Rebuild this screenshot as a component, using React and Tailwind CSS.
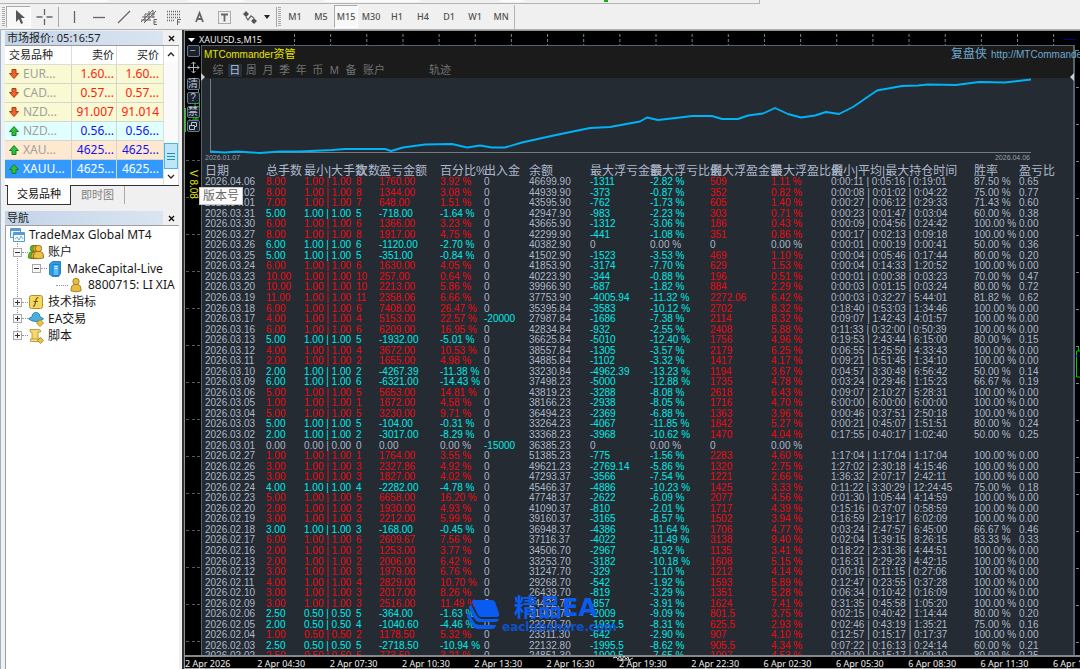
import React from "react";

const RECORDS = `2026.04.06;8.00;1.00;8;1760.00;3.92;0;46699.90;-1311;-2.82;509;1.11;0:00:11 | 0:05:16 | 0:19:01;87.50;0.65
2026.04.02;8.00;1.00;8;1344.00;3.08;0;44939.90;-373;-0.87;352;0.82;0:00:08 | 0:01:02 | 0:04:22;75.00;0.77
2026.04.01;7.00;1.00;7;648.00;1.51;0;43595.90;-762;-1.73;605;1.40;0:00:27 | 0:06:12 | 0:29:33;71.43;0.60
2026.03.31;5.00;1.00;5;-718.00;-1.64;0;42947.90;-983;-2.23;303;0.71;0:00:23 | 0:01:47 | 0:03:04;60.00;0.38
2026.03.30;6.00;1.00;6;1366.00;3.23;0;43665.90;-1312;-3.06;186;0.43;0:00:09 | 0:04:56 | 0:24:42;100.00;0.00
2026.03.27;8.00;1.00;8;1917.00;4.75;0;42299.90;-441;-1.08;351;0.86;0:00:17 | 0:02:13 | 0:09:18;100.00;0.00
2026.03.26;6.00;1.00;6;-1120.00;-2.70;0;40382.90;0;0.00;0;0.00;0:00:01 | 0:00:19 | 0:00:41;50.00;0.36
2026.03.25;5.00;1.00;5;-351.00;-0.84;0;41502.90;-1523;-3.53;469;1.10;0:00:04 | 0:05:46 | 0:17:44;80.00;0.20
2026.03.24;6.00;1.00;6;1630.00;4.05;0;41853.90;-3174;-7.70;629;1.53;0:00:04 | 0:14:33 | 1:20:52;100.00;0.00
2026.03.23;10.00;1.00;10;257.00;0.64;0;40223.90;-344;-0.88;196;0.51;0:00:01 | 0:00:38 | 0:03:23;70.00;0.47
2026.03.20;10.00;1.00;10;2213.00;5.86;0;39966.90;-687;-1.82;884;2.29;0:00:03 | 0:01:15 | 0:03:24;80.00;0.72
2026.03.19;11.00;1.00;11;2358.06;6.66;0;37753.90;-4005.94;-11.32;2272.06;6.42;0:00:03 | 0:32:27 | 5:44:01;81.82;0.62
2026.03.18;6.00;1.00;6;7408.00;26.47;0;35395.84;-3583;-10.12;2702;8.32;0:18:40 | 0:53:03 | 1:34:46;100.00;0.00
2026.03.17;4.00;1.00;4;5153.00;22.57;-20000;27987.84;-1686;-7.38;2114;8.32;0:09:07 | 1:42:43 | 4:01:57;100.00;0.00
2026.03.16;6.00;1.00;6;6209.00;16.95;0;42834.84;-932;-2.55;2408;5.88;0:11:33 | 0:32:00 | 0:50:39;100.00;0.00
2026.03.13;5.00;1.00;5;-1932.00;-5.01;0;36625.84;-5010;-12.40;1756;4.96;0:19:53 | 2:43:44 | 6:15:00;80.00;0.15
2026.03.12;4.00;1.00;4;3672.00;10.53;0;38557.84;-1305;-3.57;2179;6.25;0:06:55 | 1:25:50 | 4:33:43;100.00;0.00
2026.03.11;2.00;1.00;2;1655.00;4.98;0;34885.84;-1102;-3.32;1417;4.17;0:09:21 | 0:51:45 | 1:34:10;100.00;0.00
2026.03.10;2.00;1.00;2;-4267.39;-11.38;0;33230.84;-4962.39;-13.23;1194;3.67;0:04:57 | 3:30:49 | 6:56:42;50.00;0.14
2026.03.09;6.00;1.00;6;-6321.00;-14.43;0;37498.23;-5000;-12.88;1735;4.78;0:03:24 | 0:29:46 | 1:15:23;66.67;0.19
2026.03.06;5.00;1.00;5;5653.00;14.81;0;43819.23;-3288;-8.08;2618;6.43;0:09:07 | 2:10:27 | 5:28:31;100.00;0.00
2026.03.05;1.00;1.00;1;1672.00;4.58;0;38166.23;-2938;-8.05;1716;4.70;6:00:00 | 6:00:00 | 6:00:00;100.00;0.00
2026.03.04;5.00;1.00;5;3230.00;9.71;0;36494.23;-2369;-6.88;1363;3.96;0:00:46 | 0:37:51 | 2:50:18;100.00;0.00
2026.03.03;5.00;1.00;5;-104.00;-0.31;0;33264.23;-4067;-11.85;1842;5.27;0:00:21 | 0:45:07 | 1:51:51;80.00;0.24
2026.03.02;2.00;1.00;2;-3017.00;-8.29;0;33368.23;-3968;-10.62;1470;4.04;0:17:55 | 0:40:17 | 1:02:40;50.00;0.25
2026.03.01;0.00;0.00;0;0.00;0.00;-15000;36385.23;0;0.00;0;0.00;;;
2026.02.27;1.00;1.00;1;1764.00;3.55;0;51385.23;-775;-1.56;2283;4.60;1:17:04 | 1:17:04 | 1:17:04;100.00;0.00
2026.02.26;3.00;1.00;3;2327.86;4.92;0;49621.23;-2769.14;-5.86;1320;2.75;1:27:02 | 2:30:18 | 4:15:46;100.00;0.00
2026.02.25;3.00;1.00;3;1827.00;4.02;0;47293.37;-3566;-7.54;1221;2.66;1:36:32 | 2:07:17 | 2:42:11;100.00;0.00
2026.02.24;4.00;1.00;4;-2282.00;-4.78;0;45466.37;-4886;-10.23;1425;3.33;0:11:22 | 3:30:29 | 12:24:45;75.00;0.18
2026.02.23;5.00;1.00;5;6658.00;16.20;0;47748.37;-2622;-6.09;2077;4.56;0:01:30 | 1:05:44 | 4:14:59;100.00;0.00
2026.02.20;2.00;1.00;2;1930.00;4.93;0;41090.37;-810;-2.01;1717;4.39;0:15:16 | 0:37:07 | 0:58:59;100.00;0.00
2026.02.19;3.00;1.00;3;2212.00;5.99;0;39160.37;-3165;-8.57;1502;3.94;0:16:59 | 2:19:17 | 6:02:09;100.00;0.00
2026.02.18;3.00;1.00;3;-168.00;-0.45;0;36948.37;-4386;-11.64;1706;4.77;0:03:24 | 2:47:57 | 6:45:00;66.67;0.46
2026.02.17;6.00;1.00;6;2609.67;7.56;0;37116.37;-4022;-11.49;3138;9.40;0:02:04 | 1:39:15 | 8:26:15;83.33;0.33
2026.02.16;2.00;1.00;2;1253.00;3.77;0;34506.70;-2967;-8.92;1135;3.41;0:18:22 | 2:31:36 | 4:44:51;100.00;0.00
2026.02.13;2.00;1.00;2;2006.00;6.42;0;33253.70;-3182;-10.18;1608;5.15;0:16:31 | 2:29:23 | 4:42:15;100.00;0.00
2026.02.12;3.00;1.00;3;1979.00;6.76;0;31247.70;-329;-1.10;1212;4.14;0:00:16 | 0:11:15 | 0:27:06;100.00;0.00
2026.02.11;4.00;1.00;4;2829.00;10.70;0;29268.70;-542;-1.92;1593;5.89;0:12:47 | 0:23:55 | 0:37:28;100.00;0.00
2026.02.10;3.00;1.00;3;2017.00;8.26;0;26439.70;-819;-3.29;1351;5.28;0:06:34 | 0:10:42 | 0:16:09;100.00;0.00
2026.02.09;3.00;1.00;3;2516.00;11.49;0;24422.70;-857;-3.91;1624;7.41;0:31:35 | 0:45:58 | 1:05:20;100.00;0.00
2026.02.06;2.50;0.50;5;-364.00;-1.63;0;21906.70;-2009;-9.09;801.5;3.75;0:02:15 | 0:40:42 | 1:14:44;80.00;0.20
2026.02.05;2.00;0.50;4;-1040.60;-4.46;0;22270.70;-1937.5;-8.31;625.5;2.93;0:02:46 | 0:43:19 | 1:35:21;75.00;0.16
2026.02.04;1.00;0.50;2;1178.50;5.32;0;23311.30;-642;-2.90;907;4.10;0:12:57 | 0:15:17 | 0:17:37;100.00;0.00
2026.02.03;2.50;0.50;5;-2718.50;-10.94;0;22132.80;-1995.5;-8.62;905.5;4.34;0:07:22 | 0:16:13 | 0:24:14;60.00;0.21
2026.02.02;2.50;0.50;5;773.50;3.21;0;24851.30;-1900.5;-7.65;1097;4.53;0:00:00 | 0:15:17 | 1:09:10;80.00;0.25`
  .split("\n")
  .map((line) => line.split(";"));

const COLUMNS = ["日期", "总手数", "最小|大手数", "次数", "盈亏金额", "百分比%", "出入金", "余额", "最大浮亏金额", "最大浮亏比例", "最大浮盈金额", "最大浮盈比例", "最小|平均|最大持仓时间", "胜率", "盈亏比"];

const ROW_GRID =
  "grid grid-cols-[61fr_38fr_52fr_23fr_61fr_44fr_45fr_61fr_60fr_60fr_61fr_60fr_143fr_45fr_54fr] pl-[3px] *:min-w-0 *:whitespace-nowrap";

const RED = "text-[#ee0a12]";
const CYAN = "text-[#00ebe8]";
const GRAY = "text-[#adb8c8]";

function signColor(value) {
  const n = Number(value);
  if (n > 0) return RED;
  return n < 0 ? CYAN : GRAY;
}

function percent(value) {
  return value ? value + " %" : "";
}

function ReportRow({ r }) {
  const main = signColor(r[4]);
  const cells = [
    [r[0], GRAY],
    [r[1], main],
    [r[2] + " | " + r[2], main],
    [r[3], main],
    [r[4], main],
    [percent(r[5]), main],
    [r[6], signColor(r[6])],
    [r[7], GRAY],
    [r[8], signColor(r[8])],
    [percent(r[9]), signColor(r[9])],
    [r[10], signColor(r[10])],
    [percent(r[11]), signColor(r[11])],
    [r[12], GRAY],
    [percent(r[13]), GRAY],
    [r[14], GRAY],
  ];
  return (
    <tr className={ROW_GRID + " min-h-0"}>
      {cells.map(([text, color], i) => (
        <td key={i} className={"block " + color}>
          {text}
        </td>
      ))}
    </tr>
  );
}

function EquityChart() {
  return (
    <div className="relative h-[86px] shrink-0">
      <svg className="block h-full w-full" viewBox="202 78 871 86" preserveAspectRatio="none" fill="none">
        <path d="M210.500 79V152.500H1031" stroke="#777b7f" />
        <polyline
          stroke="#00b2f6"
          strokeWidth="1.900"
          strokeLinejoin="round"
          points="210,151.500 225,152.500 237,151.500 260,153 280,151.500 300,151.500 332,150 345,149 385,149 391,151 403,147.500 425,144.500 452,144 467,147.500 480,145.500 492,147.500 505,147.500 522,142.500 540,138.500 556,135 590,128 610,127 640,121.500 647,117.500 658,120 680,117.500 692,116 712,116 722,119 738,119 748,115.500 763,113.500 775,108 788,114 801,117.500 815,115.500 826,112 839,114 853,107 877,90.500 902,86 918,85.500 928,84.500 956,85 979,82 1005,82.500 1031,79.500"
        />
      </svg>
      <div className="absolute inset-x-0 bottom-0 flex justify-between pr-[43px] pl-[3px] text-[7px] leading-[12px] text-[#98a1aa]">
        <span>2026.01.07</span>
        <span>2026.04.06</span>
      </div>
    </div>
  );
}

const MENU = ["综", "日", "周", "月", "季", "年", "币", "M", "备"];

function Watermark() {
  return (
    <div className="pointer-events-none absolute bottom-5 left-[262px] flex items-center gap-0.5 text-[#0a5cf0]">
      <svg width="36" height="34" viewBox="0 0 36 34" fill="currentColor">
        <path d="M10 1h18q2 0 3 2l4 11q1 4-3 4H17q-2 0-3-2L8 3Q8 1 10 1Z" />
        <path d="M7 6l6 11q2 3 5 3h17q-1 3-4 3H16q-4 0-6-4L5 9Q5 6 7 6Z" />
        <path d="M4 13l6 10q2 3 6 3h16q-1 4-4 4H14q-4 0-6-4L3 18q-1-3 1-5Z" />
      </svg>
      <div className="font-['DejaVu_Sans','Noto_Sans_CJK_SC',sans-serif] font-bold">
        <div className="pl-3 text-[24px] leading-[24px]">精品EA</div>
        <div className="text-[12px] leading-[15px] opacity-80">eaclubshare.com</div>
      </div>
    </div>
  );
}

function ReportPanel() {
  return (
    <div className="relative flex min-w-0 flex-1 flex-col border-t border-r-2 border-l border-[#55616e] bg-[#242b33]">
      <div className="h-8 shrink-0 bg-[#1b1b1b]">
        <div className="flex h-4 items-center justify-between pl-0.5 whitespace-nowrap">
          <span className="text-[10px] text-[#e6e600]">
            MTCommander<span className="text-[11px]">资管</span>
          </span>
          <a href="#report" className="-mr-2 flex w-[130px] items-center gap-1 text-[10px] text-[#6fa8cf]">
            <span className="text-[12px]">复盘侠</span>http://MTCommander
          </a>
        </div>
        <div className="flex h-4 items-center pl-[9px] text-[11px] text-[#6e7276]">
          <div className="flex w-[147px] justify-between">
            {MENU.map((m) => (
              <button
                key={m}
                className={
                  m === "日"
                    ? "h-[13px] w-3.5 bg-[#26303c] leading-[12px] text-[#a9c0dc]"
                    : "h-[13px] w-3.5 leading-[12px]"
                }
              >
                {m}
              </button>
            ))}
          </div>
          <button className="ml-[5px] leading-[12px]">账户</button>
          <button className="ml-11 leading-[12px]">轨迹</button>
        </div>
      </div>
      <EquityChart />
      <div className="min-h-0 flex-1 overflow-hidden">
        <table className="block w-full text-[10px] leading-[11px]">
          <thead className="block">
            <tr className={ROW_GRID + " h-3 text-[12px] leading-[14px] text-[#aeb8ca]"}>
              {COLUMNS.map((c, i) => (
                <th key={i} className="block text-left font-normal">
                  {c}
                </th>
              ))}
            </tr>
          </thead>
          <tbody className="grid h-[485px] auto-rows-fr">
            {RECORDS.map((r) => (
              <ReportRow key={r[0]} r={r} />
            ))}
          </tbody>
        </table>
      </div>
      <svg className="absolute top-[27px] -left-px h-2 w-1" viewBox="0 0 4 8">
        <path d="M0 0l4 4-4 4Z" fill="#c8ccd0" />
      </svg>
      <svg className="absolute top-[27px] -right-px h-2 w-1" viewBox="0 0 4 8">
        <path d="M4 0L0 4l4 4Z" fill="#c8ccd0" />
      </svg>
      <Watermark />
    </div>
  );
}

const TIMES = ["2 Apr 2026", "2 Apr 04:30", "2 Apr 07:30", "2 Apr 10:30", "2 Apr 13:30", "2 Apr 16:30", "2 Apr 19:30", "2 Apr 22:30", "6 Apr 02:30", "6 Apr 05:30", "6 Apr 08:30", "6 Apr 11:30", "6 Apr 14:30"];

const STRIP_BUTTON =
  "flex h-3 w-[13px] items-center justify-center rounded-[2px] border border-[#67798c] bg-[#1b222b] text-[10px] leading-none text-[#b9c8d8]";

function SideStrip() {
  return (
    <div className="relative w-4 shrink-0">
      <svg className="absolute inset-0 h-full w-4" fill="none">
        <defs>
          <pattern id="scale" width="16" height="37" patternUnits="userSpaceOnUse" y="115">
            <path d="M1 .5h3M7 .5h3M12 .5h3" stroke="#4d5963" />
          </pattern>
        </defs>
        <rect y="100" width="16" height="510" fill="url(#scale)" />
        <path d="M.5 63v24M3 86v-8h5v-4h6M13.500 42v12M10 56v14M14.500 58v14M5 74v10M11 73v8" stroke="#00d800" />
      </svg>
      <div className="relative flex flex-col items-center gap-[2px]">
        <button className={STRIP_BUTTON} aria-label="收起">−</button>
        <svg className="my-0.5 h-[13px] w-[13px]" viewBox="0 0 13 13" fill="none" stroke="#b4bac0">
          <path d="M6.500 1v11M1 6.500h11M4.500 3l2-2 2 2M4.500 10l2 2 2-2M3 4.500l-2 2 2 2M10 4.500l2 2-2 2" />
        </svg>
        <button className={STRIP_BUTTON}>清</button>
        <button className={STRIP_BUTTON}>?</button>
        <button className={STRIP_BUTTON}>禁</button>
        <button className={STRIP_BUTTON} aria-label="还原">
          <svg className="h-2.5 w-2.5" viewBox="0 0 10 10" fill="none" stroke="currentColor">
            <path d="M3.500 4V1.500h5v4H7M1.500 4.500h5v4h-5Z" />
          </svg>
        </button>
        <div className="mt-9 text-[10px] leading-[14px] text-[#e6e600] [writing-mode:vertical-rl]">V 8.08</div>
      </div>
      <div className="absolute top-[142px] left-[14px] z-10 border border-[#c8c8c8] bg-[#fafafa] px-[3px] text-[12px] leading-[16px] whitespace-nowrap text-[#696969]">
        版本号
      </div>
    </div>
  );
}

function ChartWindow() {
  return (
    <main className="flex min-w-0 flex-1 flex-col overflow-hidden border-t border-l border-[#8f9294] bg-black font-['Liberation_Sans','Noto_Sans_CJK_SC',sans-serif]">
      <div className="flex h-3.5 shrink-0 items-center border-t border-black pt-0.5 pl-[3px]">
        <svg className="mr-1 h-1 w-[7px]" viewBox="0 0 7 4">
          <path d="M0 0h7L3.500 4Z" fill="#fff" />
        </svg>
        <h1 className="font-['Noto_Sans',sans-serif] text-[9px] leading-[12px] text-[#eee]">XAUUSD.s,M15</h1>
        <svg className="h-full min-w-0 flex-1" fill="none">
          <defs>
            <pattern id="periods" width="36.150" height="12" patternUnits="userSpaceOnUse" x="32">
              <path d="M.5 0v11" stroke="#7d858c" strokeDasharray="3 2" />
            </pattern>
          </defs>
          <rect x="20" width="100%" height="12" fill="url(#periods)" />
        </svg>
        <div className="mr-1 h-px w-3 bg-[#0000a8]" />
      </div>
      <div className="flex min-h-0 flex-1">
        <SideStrip />
        <ReportPanel />
        <svg className="h-full w-[5px] shrink-0" fill="none">
          <defs>
            <pattern id="ticks" width="5" height="37" patternUnits="userSpaceOnUse" y="5">
              <path d="M1 .5h3" stroke="#7d858c" />
            </pattern>
          </defs>
          <rect width="5" height="100%" fill="url(#ticks)" />
          <path d="M0 427.500h5" stroke="#7d858c" />
          <path d="M1.500 306h5v26h-5ZM3.500 302v4" stroke="#00c800" />
          <path d="M0 311h5" stroke="#0000c8" />
        </svg>
      </div>
      <footer className="relative grid h-3.5 shrink-0 grid-cols-[repeat(12,72fr)_27fr] border-t-2 border-b border-t-[#85888c] border-b-[#aaa] font-['Noto_Sans',sans-serif] text-[9px] leading-[13px] text-[#eee]">
        {TIMES.map((t) => (
          <span key={t} className="min-w-0 whitespace-nowrap">
            {t}
          </span>
        ))}
        <svg className="absolute -top-0.5 left-[428px] h-1.5 w-5" viewBox="0 0 20 6" fill="none" stroke="#d8d8d8">
          <path d="M0 3l3-1 2 2 2-3 2 4 2-4 2 3 2-2 1 3 4-2M4 5h12" />
        </svg>
      </footer>
    </main>
  );
}

/* ---------- toolbar ---------- */

function Tool({ label, active, wide, children }) {
  return (
    <button
      aria-label={label}
      className={
        "flex h-[22px] items-center justify-center " +
        (wide ? "w-7 " : "w-[25px] ") +
        (active ? "border border-t-[#aaa] border-r-white border-b-white border-l-[#aaa] bg-[#f8f8f8]" : "")
      }
    >
      <svg width="18" height="18" viewBox="0 0 18 18" fill="none" stroke="#666" strokeWidth="1.300">
        {children}
      </svg>
    </button>
  );
}

function Grip() {
  return <div className="mx-px h-5 w-[3px] bg-[repeating-linear-gradient(#aaa_0_1px,#eee_1px_2px)]" />;
}

const FRAMES = ["M1", "M5", "M15", "M30", "H1", "H4", "D1", "W1", "MN"];

function Toolbar() {
  return (
    <header className="shrink-0 bg-[#f0f0f0]">
      <div className="flex h-1 w-[760px] max-w-full items-start gap-20 border-r border-b border-[#b4b4b4] pl-20">
        <i className="h-0.5 w-7 bg-[#fafafa]" />
        <i className="h-0.5 w-14 bg-[#fafafa]" />
        <i className="h-0.5 w-24 bg-[#fafafa]" />
        <i className="h-0.5 w-6 bg-[#fafafa]" />
        <i className="h-0.5 w-1 bg-[#14b014]" />
      </div>
      <div className="flex h-[26px] items-center border-b border-[#b0b0b0] bg-[#f0f0f0] pl-px">
        <Grip />
        <Tool label="光标" active>
          <path d="M6 2v12l3-3 2 5 2-1-2-5h4Z" fill="#555" stroke="none" />
        </Tool>
        <Tool label="十字准线">
          <path d="M9.500 1v6M9.500 11v6M1.500 9h6M11.500 9h6" />
        </Tool>
        <div className="mx-0.5 h-5 w-px bg-[#a8a8a8]" />
        <Tool label="垂直线">
          <path d="M9.500 3v12" />
        </Tool>
        <Tool label="水平线">
          <path d="M3 9.500h12" />
        </Tool>
        <Tool label="趋势线">
          <path d="M3 15L15 3" />
        </Tool>
        <Tool label="等距通道">
          <path d="M1 14L13 2M4 15L16 3M2 9h13M1 12h10M5 6h10M5 6v8M9 3v9M13 2v8" strokeWidth="1" />
          <path d="M17 11.500h-3v5h3M14 14h2.500" strokeWidth="1" />
        </Tool>
        <Tool label="斐波纳契回调线">
          <path d="M2 3.500h13M2 6.500h13M2 9.500h13M2 12.500h8" strokeDasharray="1 1" />
          <path d="M12.500 17v-5.500H16M12.500 14H15" strokeWidth="1" />
        </Tool>
        <Tool label="文字">
          <path d="M6 14L9.500 5 13 14M7 11h5" strokeWidth="1.800" />
        </Tool>
        <Tool label="文本标签">
          <rect x="3.500" y="3.500" width="12" height="12" strokeDasharray="1 1" strokeWidth="1" />
          <path d="M6 6.500h7M9.500 6.500v7" strokeWidth="1.800" />
        </Tool>
        <Tool label="箭头" wide>
          <path d="M5 3l3 3-3 3-3-3ZM13 10l3 3-3 3-3-3Z" fill="#555" stroke="none" />
          <path d="M5 9l2 3 3-4 3 2" />
        </Tool>
        <svg className="mr-1 h-1 w-1.5" viewBox="0 0 6 4">
          <path d="M0 0h6L3 4Z" fill="#222" />
        </svg>
        <div className="ml-0.5 h-5 w-px bg-[#a8a8a8]" />
        <Grip />
        {FRAMES.map((f) => (
          <button
            key={f}
            className={
              f === "M15"
                ? "h-[23px] w-6 border border-t-[#aaa] border-r-white border-b-white border-l-[#aaa] bg-[#f8f8f8] text-center font-['Noto_Sans',sans-serif] text-[9px] font-medium text-[#505050]"
                : "h-[22px] w-[26px] text-center font-['Noto_Sans',sans-serif] text-[9px] font-medium text-[#505050]"
            }
          >
            {f}
          </button>
        ))}
        <div className="h-6 w-px bg-[#b4b4b4]" />
      </div>
    </header>
  );
}

/* ---------- left column ---------- */

function PanelTitle({ children }) {
  return (
    <div className="flex h-3.5 shrink-0 items-center">
      <h2 className="min-w-0 flex-1 bg-linear-to-r from-[#c3d4e8] to-[#dae5f2] pl-0.5 text-[11px] leading-[14px] text-[#222]">
        {children}
      </h2>
      <button aria-label="关闭" className="flex h-3.5 w-4 items-center justify-center">
        <svg className="h-[7px] w-[7px]" viewBox="0 0 7 7" stroke="#111" strokeWidth="1.400">
          <path d="M1 1l5 5M6 1L1 6" />
        </svg>
      </button>
    </div>
  );
}

const QUOTES = [
  ["EUR...", "1.60...", "1.60...", false, "bg-[#fafad2] text-[#ff2010]"],
  ["CAD...", "0.57...", "0.57...", false, "bg-[#fafad2] text-[#ff2010]"],
  ["NZD...", "91.007", "91.014", false, "bg-[#fafad2] text-[#ff2010]"],
  ["NZD...", "0.56...", "0.56...", true, "bg-[#e0ffff] text-[#1414f0]"],
  ["XAU...", "4625...", "4625...", true, "bg-[#ffe8d0] text-[#1414f0]"],
  ["XAUU...", "4625...", "4625...", true, "bg-[#3399ff] text-white"],
];

function QuoteArrow({ up }) {
  return (
    <svg className="h-2.5 w-2.5 shrink-0" viewBox="0 0 10 10" strokeLinejoin="round">
      {up ? (
        <path d="M5 .5l4.500 5H7v4H3v-4H.5Z" fill="#2fbf3a" stroke="#12802a" />
      ) : (
        <path d="M5 9.500l4.500-5H7v-4H3v4H.5Z" fill="#f0622c" stroke="#b03a14" />
      )}
    </svg>
  );
}

function MarketWatch() {
  return (
    <section>
      <PanelTitle>市场报价: 05:16:57</PanelTitle>
      <div className="flex border-t border-[#999] bg-white">
        <table className="mb-1.5 min-w-0 flex-1 table-fixed border-separate border-spacing-0 self-start text-[12px] leading-[18px]">
          <thead>
            <tr className="h-[19px] text-[#222]">
              <th className="w-[67px] border-r border-b border-[#ddd] p-0 pl-1 text-left text-[11px] font-normal">交易品种</th>
              <th className="border-r border-b border-[#ddd] p-0 pr-0.5 text-right text-[11px] font-normal">卖价</th>
              <th className="border-b border-[#ddd] p-0 pr-1 text-right text-[11px] font-normal">买价</th>
            </tr>
          </thead>
          <tbody>
            {QUOTES.map(([name, bid, ask, up, tone], i) => (
              <tr key={i} className={"h-[19px] " + tone}>
                <td className="border-r border-b border-[#d4d4d4] p-0">
                  <div className={"flex items-center gap-1 pl-1 " + (i < 5 ? "text-[#a0a0a0]" : "")}>
                    <QuoteArrow up={up} />
                    {name}
                  </div>
                </td>
                <td className="border-r border-b border-[#d4d4d4] p-0 pr-0.5 text-right">{bid}</td>
                <td className="border-b border-[#d4d4d4] p-0 pr-1 text-right">{ask}</td>
              </tr>
            ))}
          </tbody>
        </table>
        <div className="flex w-4 flex-col border-x border-[#ddd] bg-[#fafafa]">
          <button aria-label="向上" className="flex h-4 items-center justify-center bg-white">
            <svg className="h-1.5 w-2" viewBox="0 0 8 6" fill="none" stroke="#222" strokeWidth="1.300">
              <path d="M1 5l3-3 3 3" />
            </svg>
          </button>
          <div className="flex-1" />
          <div className="flex h-[26px] flex-col items-center justify-center gap-0.5 border border-[#4ab8dc] bg-[#bfe6f6]">
            <i className="h-px w-2 bg-[#2090b8]" />
            <i className="h-px w-2 bg-[#2090b8]" />
            <i className="h-px w-2 bg-[#2090b8]" />
          </div>
          <button aria-label="向下" className="flex h-4 items-center justify-center bg-white">
            <svg className="h-1.5 w-2" viewBox="0 0 8 6" fill="none" stroke="#222" strokeWidth="1.300">
              <path d="M1 1l3 3 3-3" />
            </svg>
          </button>
        </div>
      </div>
      <div className="flex h-[22px] items-start border-t border-[#333] pl-0.5 text-[11px]">
        <button className="-mt-px h-5 w-16 border-r border-b border-l border-[#333] bg-white text-[#111]">交易品种</button>
        <button className="h-[18px] w-[54px] border-r border-[#aaa] text-[#808080]">即时图</button>
      </div>
    </section>
  );
}

function Person({ color, stroke, x }) {
  return (
    <g fill={color} stroke={stroke} strokeWidth="0.800">
      <path d={"M" + x + " 14v-2q0-4 3-4.500h4q3 .5 3 4.500v2q-5 1.500-10 0Z"} />
      <circle cx={x + 5} cy="4.500" r="3.200" />
    </g>
  );
}

function TreeIcon({ kind }) {
  return (
    <svg className="h-4 w-4 shrink-0" viewBox="0 0 16 16" fill="none">
      {kind === "app" && (
        <g stroke="#5a9ad0">
          <path d="M1.500 1.500h10v9h-10Z" fill="#e4f2fc" />
          <path d="M4.500 5.500h11v9h-11Z" fill="#f4faff" />
          <path d="M1 3h11M4 7h12" strokeWidth="2" />
          <path d="M6 12l2-2 2 3 2-4 2 3" strokeWidth="0.800" />
        </g>
      )}
      {kind === "accounts" && (
        <g>
          <Person color="#50c828" stroke="#208010" x={0.5} />
          <Person color="#d8a828" stroke="#906010" x={3} />
          <Person color="#ecc248" stroke="#906010" x={5.5} />
        </g>
      )}
      {kind === "server" && (
        <g stroke="#1870b8" strokeWidth="0.800">
          <path d="M2.500 3l3-2.500h8v12l-2 3h-6l-3-2Z" fill="#2c9ce8" />
          <path d="M6 3.500h6v11H6Z" fill="#58bcf8" />
          <path d="M7.500 5.500h3M7.500 7.500h3" stroke="#fff" />
        </g>
      )}
      {kind === "user" && <Person color="#e8bc3c" stroke="#987018" x={3} />}
      {kind === "indicator" && (
        <g>
          <rect x="1.500" y="1.500" width="13" height="13" rx="2" fill="#f4d860" stroke="#b89020" />
          <path d="M10.500 4q-2-1-2.500 2l-1 4q-.5 2.500-2 2M5.500 7.500h4.500" stroke="#765410" strokeWidth="1.200" />
        </g>
      )}
      {kind === "expert" && (
        <g strokeWidth="0.800">
          <path d="M4 6q0-4.500 4-4.500t4 4.500q3 .5 3.500 2Q12 10.500 8 10.500T.5 8Q1 6.500 4 6Z" fill="#4cacdc" stroke="#2078a8" />
          <path d="M12 8.500l3.500 3.500-3.500 3.500L8.500 12Z" fill="#f0c440" stroke="#a07818" />
        </g>
      )}
      {kind === "script" && (
        <g strokeWidth="0.800">
          <path d="M2 1.500h9q2 0 1.500 2.500H10v6l2 3H4V4.500Q1 4 2 1.500Z" fill="#f4d870" stroke="#b08c20" />
          <path d="M2.500 11h8v2.500h-8Z" fill="#f8e490" stroke="#b08c20" />
          <path d="M12.500 9.500l3 3-3 3-3-3Z" fill="#f0c440" stroke="#a07818" />
        </g>
      )}
    </svg>
  );
}

function Toggle({ open }) {
  return (
    <button aria-label="展开或收起" className="flex h-[9px] w-[9px] shrink-0 items-center justify-center border border-[#a8a8a8] bg-[#f8f8f8]">
      <svg className="h-[5px] w-[5px] shrink-0" viewBox="0 0 5 5" stroke="#333">
        <path d={open ? "M0 2.500h5" : "M0 2.500h5M2.500 0v5"} />
      </svg>
    </button>
  );
}

const TREE = [
  ["pl-[3px]", null, "app", "TradeMax Global MT4"],
  ["pl-[7px]", "open", "accounts", "账户"],
  ["pl-[26px]", "open", "server", "MakeCapital-Live"],
  ["pl-[50px]", "leaf", "user", "8800715: LI XIA"],
  ["pl-[7px]", "closed", "indicator", "技术指标"],
  ["pl-[7px]", "closed", "expert", "EA交易"],
  ["pl-[7px]", "closed", "script", "脚本"],
];

function Navigator() {
  return (
    <section className="flex min-h-0 flex-1 flex-col">
      <PanelTitle>导航</PanelTitle>
      <div className="min-h-0 flex-1 border-t border-l border-[#a0a0a0] bg-white pt-px">
        <ul className="relative grid h-[117px] auto-rows-fr text-[12px] leading-[16px] text-[#181818]">
          <li className="absolute top-4 left-[11px] h-[92px] border-l border-dotted border-[#999]" aria-hidden="true" />
          {TREE.map(([pad, state, icon, label]) => (
            <li key={label} className={"relative flex items-center whitespace-nowrap " + pad}>
              {(state === "open" || state === "closed") && <Toggle open={state === "open"} />}
              {state && <i className={"h-0 border-t border-dotted border-[#999] " + (state === "leaf" ? "w-3" : "w-1.5")} />}
              <TreeIcon kind={icon} />
              <span className="pl-1">{label}</span>
            </li>
          ))}
        </ul>
      </div>
    </section>
  );
}

export default function App() {
  return (
    <div className="flex h-screen w-full flex-col overflow-hidden bg-[#f0f0f0] font-['Noto_Sans','Noto_Sans_CJK_SC',sans-serif]">
      <Toolbar />
      <div className="flex min-h-0 flex-1">
        <aside className="flex w-[184px] shrink-0 flex-col gap-1 border-r-2 border-l border-r-[#333] border-l-[#9cb4cc] pt-px pr-[3px] pl-1">
          <MarketWatch />
          <Navigator />
        </aside>
        <ChartWindow />
      </div>
    </div>
  );
}
